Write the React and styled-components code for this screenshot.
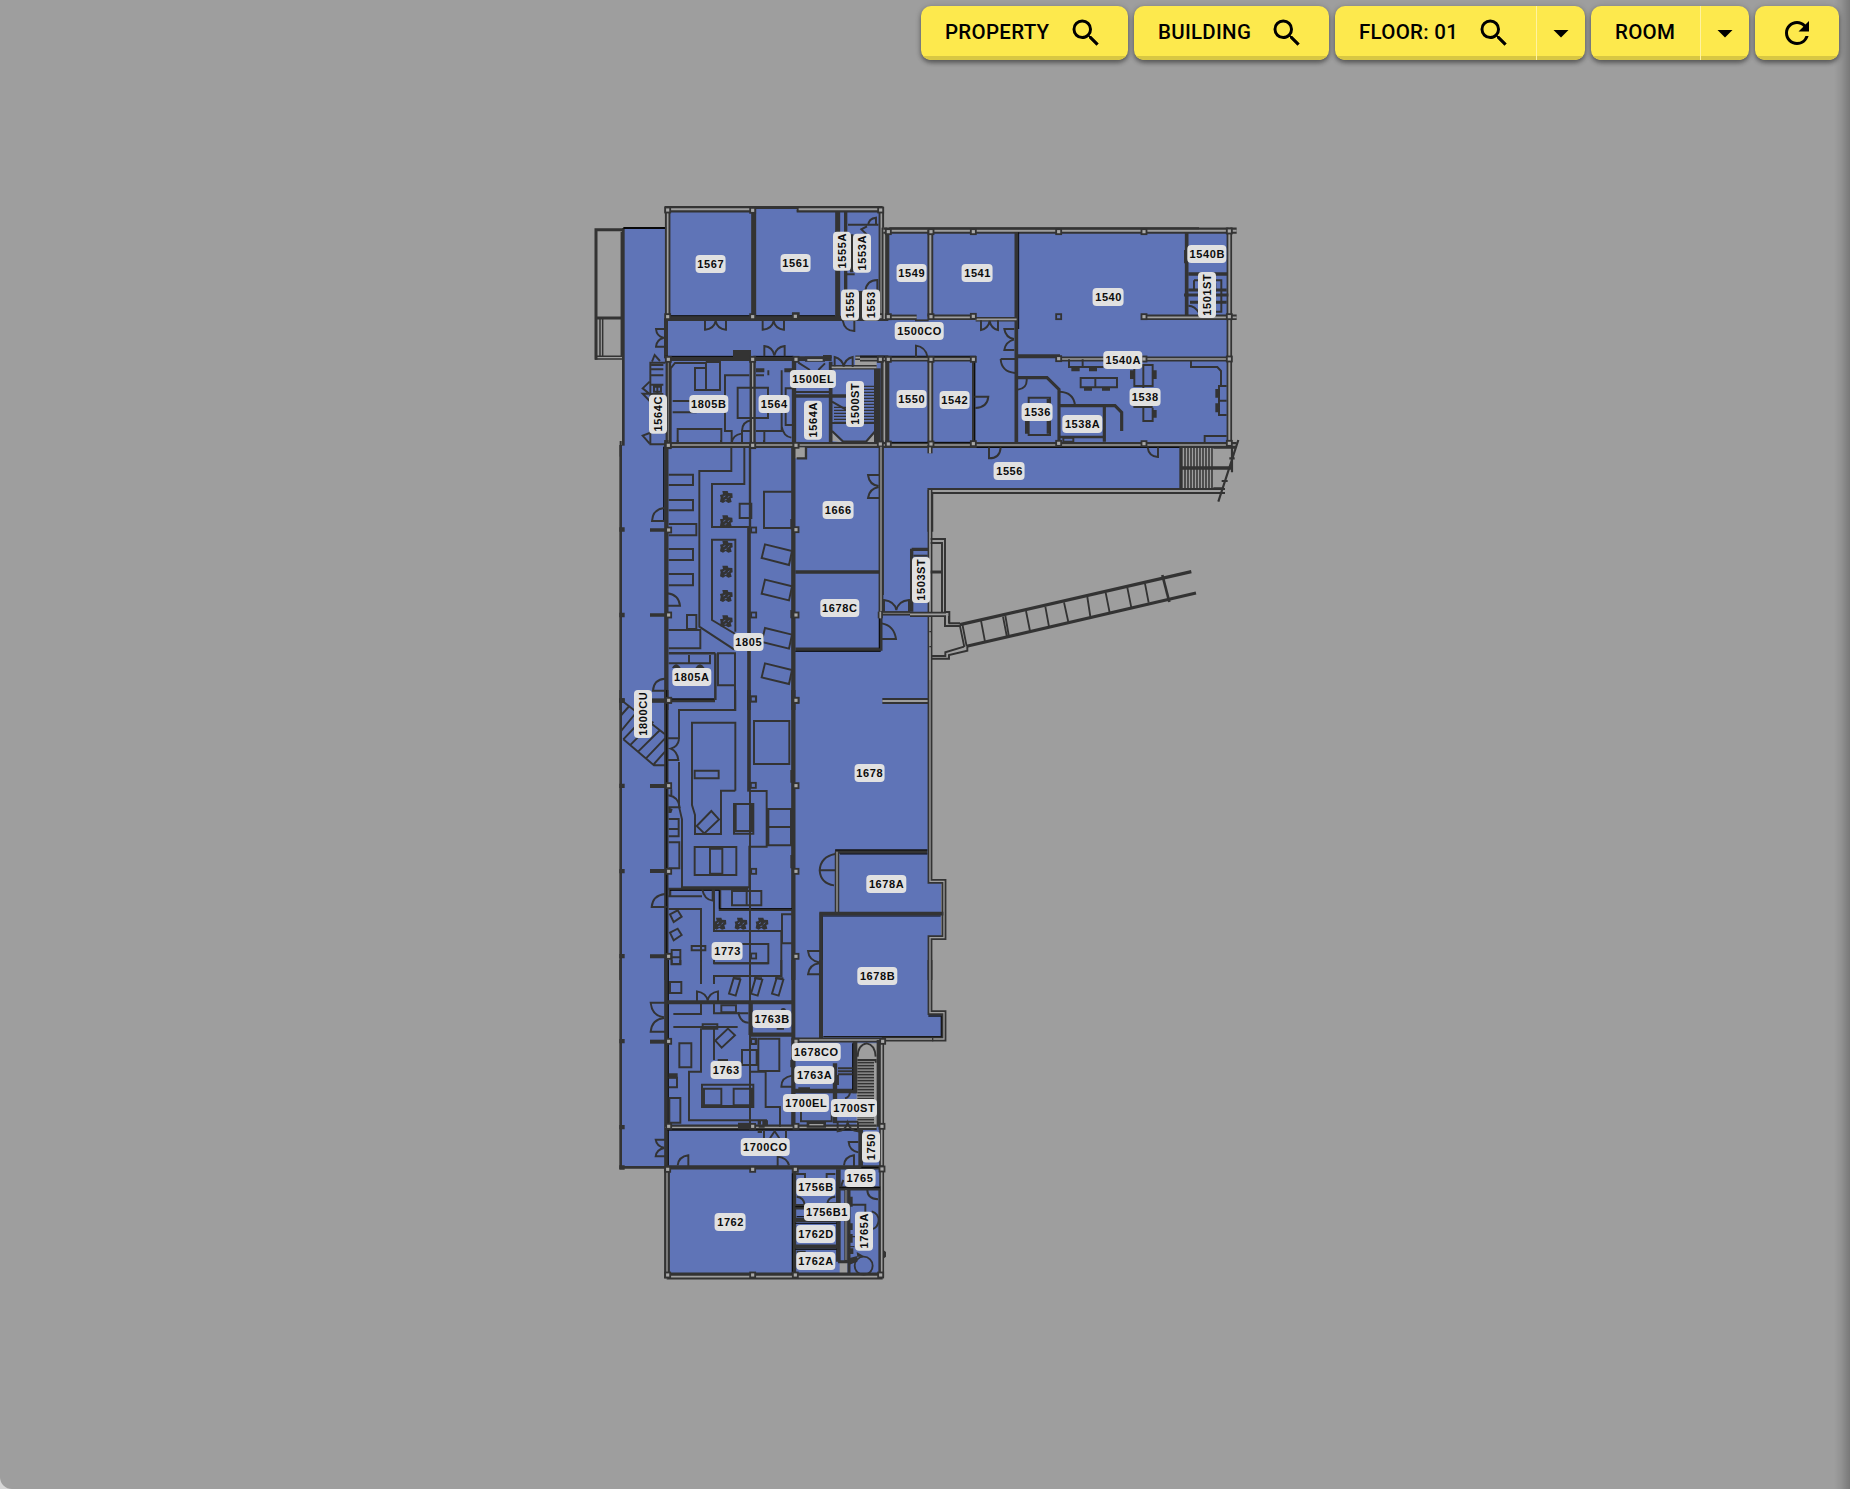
import React from "react";
import styled, { createGlobalStyle, css } from "styled-components";

const ink = "#333333";
const ground = "#9e9e9e";
const room = "#5f74b7";
const yellow = "#fde94d";

const GlobalStyle = createGlobalStyle`
  html, body { margin: 0; padding: 0; background: #d6d6d6; }
  *, *::before, *::after { box-sizing: border-box; }
`;

const Viewport = styled.main`
  position: relative;
  width: 1850px;
  height: 1489px;
  overflow: hidden;
  background: ${ground};
  border-bottom-left-radius: 12px;
  font-family: Roboto, "Liberation Sans", sans-serif;
`;

const EdgeShade = styled.div`
  position: absolute;
  inset: 0 0 0 auto;
  width: 16px;
  background: linear-gradient(to right, rgba(0, 0, 0, 0), rgba(0, 0, 0, 0.08) 45%, rgba(0, 0, 0, 0.24));
  pointer-events: none;
`;

const Toolbar = styled.nav`
  position: relative;
  display: flex;
  justify-content: flex-end;
  gap: 6px;
  padding: 6px 11px 0 0;
`;

const ButtonGroup = styled.div`
  display: flex;
  height: 54px;
  overflow: hidden;
  border-radius: 10px;
  background: ${yellow};
  box-shadow: 0 3px 4px rgba(0, 0, 0, 0.35), 0 1px 6px rgba(0, 0, 0, 0.2);
`;

const segment = css`
  display: flex;
  align-items: center;
  height: 54px;
  margin: 0;
  border: 0;
  color: #000;
  background: transparent;
  box-shadow: inset 0 -4px 0 #d8c743;
  cursor: pointer;
`;

const MainButton = styled.button`
  ${segment}
  justify-content: space-between;
  width: ${(p) => p.$width}px;
  padding: 0 24px;
  font: 500 20.5px/24px Roboto, sans-serif;
  letter-spacing: 0.28px;
  white-space: nowrap;
`;

const MenuButton = styled.button`
  ${segment}
  justify-content: center;
  width: 49px;
  padding: 0 1px 0 0;
  border-left: 1px solid #fff3a0;
`;

const Caption = styled.span`
  position: relative;
  top: -1px;
`;

const Icon = styled.svg`
  width: 36px;
  height: 36px;
  flex: none;
  fill: currentColor;
`;

const SearchIcon = () => (
  <Icon viewBox="0 0 24 24">
    <path d="M15.5 14h-.79l-.28-.27A6.471 6.471 0 0 0 16 9.5 6.5 6.5 0 1 0 9.5 16c1.61 0 3.09-.59 4.23-1.57l.27.28v.79l5 4.99L20.49 19l-4.99-5zm-6 0C7.01 14 5 11.99 5 9.5S7.01 5 9.5 5 14 7.01 14 9.5 11.99 14 9.5 14z" />
  </Icon>
);
const DropIcon = () => (
  <Icon viewBox="0 0 24 24">
    <path d="M7 10l5 5 5-5z" />
  </Icon>
);
const RefreshIcon = () => (
  <Icon viewBox="0 0 24 24">
    <path d="M17.65 6.35A7.958 7.958 0 0 0 12 4c-4.42 0-7.99 3.58-7.99 8s3.57 8 7.99 8c3.73 0 6.84-2.55 7.73-6h-2.08A5.99 5.99 0 0 1 12 18c-3.31 0-6-2.69-6-6s2.69-6 6-6c1.66 0 3.14.69 4.22 1.78L13 11h7V4l-2.35 2.35z" />
  </Icon>
);

/* ---------- floor plan drawing ---------- */

const Plan = styled.svg`
  position: absolute;
  inset: 0;
  width: 1850px;
  height: 1489px;
`;

const Area = styled.path`
  fill: ${(p) => (p.$void ? ground : room)};
`;

const Stroke = styled.path`
  fill: none;
  stroke: ${(p) => p.$tone || ink};
  stroke-width: ${(p) => p.$w || 5.8};
`;

const Solid = styled.path`
  fill: ${ink};
`;

const Column = styled.rect`
  fill: ${(p) => (p.$blue ? room : "#a8a8a8")};
  stroke: ${ink};
  stroke-width: 5.5;
`;

const Hollow = ({ d, w = 16, gap = 5 }) => (
  <>
    <Stroke d={d} $w={w + 1.5} />
    <Stroke d={d} $w={gap} $tone={ground} />
  </>
);

const Columns = ({ at, blue }) =>
  at.map(([x, y]) => <Column key={`${x}-${y}`} x={x - 7.5} y={y - 7.5} width="15" height="15" $blue={blue} />);

const Chair = ({ x, y }) => (
  <g transform={`translate(${x} ${y})`}>
    <Solid d="M-12 -18L4 -18L6 -12L18 -11L19 2L13 4L16 15L6 18L-2 13L-10 18L-19 14L-17 2L-19 -6L-10 -8Z" />
    <Stroke d="M-9 0L-3 -3M5 2L9 -3M-5 9L1 7" $w={2.5} $tone={room} />
  </g>
);

const treads = (from, to, step, make) => {
  let d = "";
  for (let v = from; v <= to; v += step) d += make(v);
  return d;
};

/* Each wing is drafted at three units to the pixel from its own corner. */
const Wing = ({ x, y, children }) => <g transform={`translate(${x} ${y}) scale(0.33333)`}>{children}</g>;

const NorthWest = () => (
  <Wing x={580} y={195}>
    <Area $void d="M825 495H890V515H825ZM755 738V710L785 742ZM890 742V705L860 742Z" />
    <Stroke d="M48 100V494M45 104H130M45 369H130" $w={9} />
    <Stroke d="M60 372V484M68 372V484M45 484H130M45 492H130M124 110V484" $w={4.5} />
    <Stroke d="M130 99V752" $w={8} />
    <Stroke d="M122 738V785" $w={6} />
    <Stroke d="M130 99H256" $tone="#080808" />
    <Hollow d="M254 43H908" w={18} gap={6} />
    <Stroke d="M528 47H650" $w={14} $tone={room} />
    <Stroke d="M528 39H653V49" />
    <Hollow d="M263 36V370" w={15} />
    <Hollow d="M904 36V372" w={15} />
    <Stroke d="M521 40V365M773 50V370" $w={15} />
    <Stroke d="M797 50V290M815 120V232" $w={10} />
    <Stroke d="M256 370H925" $w={16} />
    <Stroke d="M256 362H515M528 362H765" $w={3} $tone="#111" />
    <Stroke d="M258 370V490" $w={12} />
    <Stroke d="M256 491H755" $w={14} />
    <Stroke d="M256 484H460M520 484H640" $w={3} $tone="#080808" />
    <Hollow d="M265 490V750" w={15} gap={2} />
    <Hollow d="M518 490V750" w={17} gap={4} />
    <Stroke d="M642 490V750" $w={13} />
    <Hollow d="M256 750H925" w={16} gap={4} />
    <Stroke d="M648 603H826M752 500V745" $w={11} />
    <Stroke d="M892 520V745" $w={20} />
    <Hollow d="M910 490V750" w={14} />
    <Hollow d="M826 488H925" w={12} />
    <Hollow d="M755 517H890" w={12} />
    <Solid d="M459 465H513V492H459ZM636 365V352H659V365ZM850 288H833V375H850ZM528 520H553V532H528ZM613 520H640V532H613ZM675 485H735V500H675ZM729 480H755V490H729Z" />
    <Stroke d="M682 495H728" $w={6} $tone={ground} />
    <Columns at={[[263, 45], [518, 46], [902, 45], [263, 365], [518, 365], [646, 364], [902, 365], [265, 493], [518, 493], [648, 493], [902, 493], [264, 752], [518, 752], [648, 752]]} />

    <Stroke d="M375 376V404Q402 402 407 378Q412 402 438 404V376M548 376V404Q576 402 581 378Q586 402 612 404V376M553 484V453Q579 456 583 482Q588 456 614 453V484" />
    <Stroke d="M256 402H228Q230 424 250 428H256M256 455H228Q230 434 250 429M823 376V408Q794 408 788 376M764 514V486Q787 492 791 515Q796 491 818 486V516" />
    <Stroke d="M804 89H895M895 90L888 88V68Q866 70 864 92M861 94L844 103L862 120M892 288V255Q860 255 856 288M800 238H824M810 121H820M812 155H820" />
    <Stroke d="M256 503H211V748H256M214 510H250M214 523H250M214 541H250M214 569H250M214 597H250M232 569V600M222 575H243V590H222Z" />
    <Stroke d="M209 560L188 580L209 597M216 500L224 480L240 498M209 596H188L209 618M209 714L188 722L209 746" />
    <Stroke d="M272 748V520L285 504H378M378 500V585M378 501H420V585H345V519H378M278 618H330M278 652H350M293 745V702H424V745" />
    <Stroke d="M508 541H435V708H455V745M473 578H564V669H473ZM455 745Q458 720 484 716M486 745V708H510M486 708Q486 680 515 676" />
    <Stroke d="M553 742V708H605M528 708H605V526M640 580H617V690H640M605 694Q610 724 634 728M528 541H552M565 526V541" />
    <Stroke d="M655 503L690 525M735 505L715 525M647 591H752M690 530H760" />
    <Stroke d={treads(574, 688, 9, (v) => `M${v < 630 ? 848 : 762} ${v}H882`)} $w={3.5} />
    <Stroke d="M756 620L798 644M756 684H886M756 708L790 740H858L888 706" $w={6.5} />
  </Wing>
);

const NorthEast = () => (
  <Wing x={860} y={195}>
    <Stroke d="M83 105V370M83 490V750" $w={10} />
    <Hollow d="M73 98V372" w={15} />
    <Hollow d="M73 490V756" w={12} />
    <Hollow d="M70 107H1130" w={17} gap={6} />
    <Stroke d="M88 100H1017" $w={6} />
    <Hollow d="M211 105V368" w={16} gap={6} />
    <Hollow d="M211 490V750" w={16} gap={6} />
    <Stroke d="M469 112V745" $w={11} />
    <Stroke d="M476 112V402" $w={3} $tone="#080808" />
    <Hollow d="M80 367H170" w={15} />
    <Hollow d="M203 367H345" w={15} />
    <Hollow d="M347 373H470" w={12} />
    <Stroke d="M165 376H206" />
    <Stroke d="M0 484H348" $w={4} $tone="#080808" />
    <Hollow d="M0 492H348" w={14} />
    <Stroke d="M341 490V748" $w={10} />
    <Stroke d="M344 500V745" $w={3} $tone="#080808" />
    <Hollow d="M0 750H1130" w={16} gap={5} />
    <Stroke d="M85 742H340M350 757H958" $w={3} $tone="#080808" />
    <Stroke d="M980 112V368" $w={11} />
    <Hollow d="M1108 98V750" w={15} gap={6} />
    <Hollow d="M843 367H1130" w={15} />
    <Stroke d="M985 237H1102" $w={10} />
    <Stroke d="M472 484H600" $w={12} />
    <Hollow d="M600 492H1112" w={14} />
    <Stroke d="M472 548H561L597 583V745M600 632H765L785 652V708M733 636V740" $w={9.5} />
    <Stroke d="M600 726H733" $w={8} />
    <Hollow d="M1095 888H211V1010" w={16} gap={6} />
    <Hollow d="M65 758V1200" w={12} />
    <Hollow d="M210 750V775" w={14} gap={6} />
    <Columns at={[[85, 110], [213, 110], [340, 110], [596, 110], [852, 110], [1108, 108], [85, 365], [213, 365], [340, 364], [852, 365], [1108, 365], [61, 493], [85, 493], [213, 493], [340, 493], [596, 491], [852, 492], [1108, 492], [61, 747], [85, 747], [213, 747], [340, 746], [596, 745], [852, 746], [1108, 745]]} />
    <Columns blue at={[[596, 365]]} />

    <Stroke d="M363 376V405Q385 400 389 378Q393 400 414 405V376M463 402H433Q437 428 462 432M463 465H433Q437 440 462 434M422 492H465M422 492Q424 530 465 534" />
    <Stroke d="M168 488V452Q196 456 202 484M343 605H385Q382 638 346 639M387 757V790Q420 790 422 757M894 757V786Q866 784 863 757M500 552Q502 580 474 584M600 590Q640 592 645 630" />
    <Stroke d="M627 493V516H730M668 493V516M662 549H771V577H662ZM706 549V577" />
    <Solid d="M634 517H659V529H634ZM687 517H711V529H687ZM672 577H696V587H672ZM726 577H750V587H726ZM495 640H507V716H495ZM560 612H573V716H560ZM1066 582H1080V608H1066ZM1066 625H1080V652H1066ZM876 526H890V552H876ZM876 645H890V668H876ZM810 526H824V552H810Z" />
    <Stroke d="M823 510H878V573H823ZM850 510V678H878V638M823 600V636H878M506 608H570V720H506ZM993 498V516H1072L1083 528V573M1100 573H1077V617H1100M1077 617V660H1100M1100 723H1034V742M610 728H640V740H610Z" />
    <Stroke d="M1002 256H1084V350H1060M1002 256V285H1030M975 165V205M985 332Q1005 332 1018 355M1066 265V290" />
    <Stroke d="M972 300H1105M985 285H1100M990 322H1100" $w={9} />
    <Stroke d={treads(975, 1060, 9, (v) => `M${v} 758V880`)} $w={4.5} />
    <Stroke d="M963 758V882M963 819H1115" $w={10} />
    <Stroke d="M1135 735L1075 920M1116 758V832M1108 790H1124M1085 858H1103M1060 758H1130M1060 880H1090" $w={6.5} />
  </Wing>
);

const Centre = () => (
  <Wing x={610} y={440}>
    <Area $void d="M552 22H585V55H552Z" />
    <Stroke d="M32 15V810" $w={8} />
    <Stroke d="M169 0V810" $w={13} />
    <Stroke d="M161 20V245" $w={3} $tone="#080808" />
    <Stroke d="M120 270H170M120 525H170M120 781H315" $w={11} />
    <Stroke d="M550 20V810" $w={13} />
    <Stroke d="M556 396H810M556 628H812M812 520V632" $w={11} />
    <Stroke d="M556 634H812M808 530V625M175 777H312" $w={3} $tone="#080808" />
    <Stroke d="M417 262V810" $w={11} />
    <Hollow d="M813 20V525" w={13} gap={4} />
    <Hollow d="M817 783H955" w={17} gap={6} />
    <Stroke d="M316 640V780M176 640H316" $w={7.5} />
    <Stroke d="M420 18V262M560 55H588V20" $w={7} />
    <Columns at={[[175, 16], [428, 16], [558, 16], [176, 270], [558, 269], [176, 525], [558, 525], [176, 781], [558, 781]]} />
    <Columns blue at={[[431, 270], [431, 525], [431, 777]]} />
    <Solid d="M28 262H44V275H28ZM28 518H44V532H28ZM28 775H44V788H28ZM541 237H552V268H541ZM541 510H552V535H541Z" />

    <Stroke d="M176 104H249V135H176M176 180H249V211H176M176 252H259V286H176M176 327H249V360H176M176 402H249V436H176M231 525H259V567H231ZM176 570H271V625H176" />
    <Stroke d="M364 20V93H268V560L372 628M403 22V132H306V261H420M376 575V299H306V540L376 582M389 191H424V234H389Z" />
    <Stroke d="M546 155H462V264H546M465 313L546 333L537 375L455 354ZM465 419L546 439L537 481L455 461ZM465 564L546 584L537 626L455 606ZM465 670L546 690L537 732L455 712Z" />
    <Stroke d="M324 640H375V736H324ZM375 640V810M176 670H300V645M237 645V670" />
    <Solid d="M186 684Q198 662 212 684ZM256 684Q270 662 284 684Z" />
    {[171, 244, 320, 395, 468, 544].map((y) => (
      <Chair key={y} x={349} y={y} />
    ))}
    <Stroke d="M162 204Q128 208 126 243H162M172 460Q206 464 210 497H172M165 716Q131 718 129 752H165" />
    <Stroke d="M810 105H774Q778 135 806 138M810 174H774Q778 146 806 141M815 550Q852 556 858 597H815" />
    <Stroke d="M203 0V8M333 0V12M396 0V12M462 0V12" />
  </Wing>
);

const Link = () => (
  <Wing x={860} y={530}>
    <Hollow d="M210 -120V450" w={13} gap={5} />
    <Stroke d="M208 305H214M208 350H214" $w={4} />
    <Stroke d="M212 27H255V246H268V280H300M212 39H246V246M255 246V288H300" />
    <Stroke d="M212 126H246" $w={9} />
    <Hollow d="M58 250H150" w={12} gap={2} />
    <Hollow d="M150 253H258" w={14} gap={5} />
    <Hollow d="M61 245V265" w={14} gap={5} />
    <Stroke d="M155 56V245M155 58H206" $w={10} />
    <Stroke d="M160 77H203" />
    <Stroke d="M72 245V210Q104 214 109 240Q115 213 147 210V245" />
    <Stroke d="M214 386H267V375L322 362V350M214 378H256V367L312 350M267 258V280" />
    <Stroke d="M300 284L994 125M320 349L1008 189" $w={9.5} />
    <Stroke d="M299 284L313 351M307 282L320 349M363 272L375 335M429 260L441 322M436 257L447 321M498 243L510 303M556 230L567 290M612 217L625 276M682 201L691 260M737 188L749 248M802 173L814 233M855 161L866 218" $w={5.5} />
    <Stroke d="M907 135L928 216" $w={8} />
  </Wing>
);

const Middle = () => (
  <Wing x={610} y={690}>
    <Stroke d="M32 0V870" $w={8} />
    <Stroke d="M169 0V870" $w={13} />
    <Stroke d="M170 0V870" $w={3} $tone="#0c0c0c" />
    <Stroke d="M120 288H170M120 543H170M120 799H170M120 32H170" $w={12} />
    <Stroke d="M550 0V870" $w={13} />
    <Stroke d="M417 0V305" $w={11} />
    <Hollow d="M960 -30V574H1002V743H960V870" w={13} gap={4} />
    <Stroke d="M675 485H952" $w={13} />
    <Stroke d="M676 480H952M690 492H952M632 678H992M637 680V870" $w={3} $tone="#080808" />
    <Hollow d="M681 485V668" w={12} gap={4} />
    <Stroke d="M628 671H1000M633 668V870" $w={11} />
    <Stroke d="M175 597H415M330 600V659H548M180 600V620" $w={7.5} />
    <Stroke d="M180 601H328V656H546" $w={3} $tone="#080808" />
    <Columns at={[[176, 31], [558, 31], [176, 287], [558, 287], [176, 544], [558, 544], [176, 799], [558, 799]]} />
    <Columns blue at={[[430, 27], [430, 286], [431, 544], [431, 798]]} />
    <Solid d="M28 25H44V38H28ZM28 281H44V294H28ZM28 537H44V550H28ZM28 792H44V805H28ZM541 240H550V278H541ZM541 495H550V535H541ZM175 352L188 358L184 369H175Z" />

    <Stroke d="M40 35L165 133M40 148L132 226H165M34 75L58 48M34 122L75 72M40 148L95 90M62 164L130 95M85 184L150 120M108 205L165 145M132 222L165 185" />
    <Stroke d="M172 145H207V60H376V0M207 148Q204 170 182 176Q202 184 205 210H172M207 216V350L216 388V592H418V470H470V303H418" />
    <Stroke d="M376 302V98H246V345L255 375V432H333V302H376M254 242H326V265H254ZM304 363L327 388L283 430L260 408Z" />
    <Stroke d="M432 93H538V222H432ZM372 342H430V431H372ZM372 423H430M472 357H543V466H472ZM472 411H543M254 471H379V555H254ZM300 471V555M337 471V555M300 476H337M300 551H337" />
    <Stroke d="M376 345V426M425 345V426M474 357V466" $w={8} />
    <Stroke d="M176 387H206V439H176M176 417H206M176 457H208V535H176M175 316Q205 320 209 352H175M184 298V318" />
    <Stroke d="M420 300V870M165 612Q128 616 125 651H170M277 598Q282 628 308 632V598M175 619H276M312 598V723H515M273 870V657H176" />
    <Stroke d="M366 603H454V646H366ZM410 603V646M546 673H516V760H546M514 723V858H312V870M397 762H475V820H312M245 768H286V781H245ZM185 780H211V823H185ZM185 802H211" />
    <Stroke d="M180 673L203 661L215 680L191 696ZM180 728L203 716L215 735L191 751ZM370 865H392M432 865H456M495 865H520" />
    <Chair x={330} y={701} />
    <Chair x={393} y={701} />
    <Chair x={456} y={701} />
    <Stroke d="M675 492Q632 500 629 541Q632 580 672 586M629 541H677M630 783H594Q597 812 628 817M630 853H594Q597 824 628 820" />
  </Wing>
);

const South = () => (
  <Wing x={610} y={960}>
    <Area $void d="M740 250H802V500H740ZM689 905H712V941H689Z" />
    <Stroke d="M32 0V627M28 622H165" $w={8} />
    <Stroke d="M169 0V627" $w={13} />
    <Stroke d="M175 0V625" $w={3} $tone="#0c0c0c" />
    <Hollow d="M960 0V158H1002V237H815" w={13} gap={4} />
    <Stroke d="M955 168H994V230H640" $w={4} $tone="#1a1a1a" />
    <Stroke d="M550 0V240M633 0V238" $w={12} />
    <Hollow d="M552 240H815" w={13} />
    <Stroke d="M968 244V232" $w={4} />
    <Stroke d="M172 127H550" $w={12} />
    <Stroke d="M422 130V225M422 224H550" $w={13} />
    <Stroke d="M550 235V500" $w={13} />
    <Stroke d="M120 245H175" $w={12} />
    <Hollow d="M165 502H800" w={15} gap={4} />
    <Stroke d="M172 510H745" $w={4} $tone="#111" />
    <Stroke d="M735 245V400M807 240V500" $w={14} />
    <Hollow d="M815 240V950" w={13} />
    <Stroke d="M675 310V490M555 393H740" $w={13} />
    <Stroke d="M728 250V390" $w={3} $tone="#080808" />
    <Hollow d="M170 950H818" w={16} gap={5} />
    <Stroke d="M178 940H812" $w={5} />
    <Hollow d="M171 622V955" w={16} gap={4} />
    <Stroke d="M165 622H820M552 622V945" $w={13} />
    <Stroke d="M547 640V940" $w={3} $tone="#080808" />
    <Stroke d="M752 510V620M685 628V905" $w={14} />
    <Stroke d="M690 685H812M555 742H690M555 780H685M555 860H685" $w={13} />
    <Stroke d="M556 740H600M560 770H640M556 790H680M556 868H680M754 622H812M688 683H810" $w={3} $tone="#080808" />
    <Stroke d="M708 685V905" $w={10} />
    <Stroke d="M708 690V900" $w={3} $tone={ground} />
    <Stroke d="M717 690V942M684 905H716" $w={9} />
    <Stroke d="M808 690V942" />
    <Solid d="M820 870L828 876V890L820 896ZM716 710H728V740H716ZM716 790H728V810H716ZM716 822H728V848H716ZM716 865H730V882H716ZM716 895L742 888V905L716 915ZM740 876L765 890H742ZM384 488H420V508H384ZM590 486H648V503H590ZM565 382H600V394H565ZM176 340H203V355H176ZM541 300H552V322H541ZM443 482H453V494H443ZM457 480H468V496H457ZM446 497H464V503H446ZM443 510H456V519H443Z" />
    <Columns at={[[176, 244], [558, 244], [818, 244], [176, 499], [428, 499], [558, 499], [816, 499], [173, 628], [428, 628], [556, 628], [816, 627], [173, 945], [428, 945], [556, 945], [812, 945]]} />
    <Columns blue at={[[431, 244]]} />
    <Stroke d="M598 494H640" $w={4} $tone={ground} />
    <Solid d="M28 237H44V250H28ZM28 495H44V508H28ZM28 616H44V629H28Z" />

    <Stroke d="M273 0V72M312 0V10H475M514 0V48H312V72M420 0V500M180 66H214V99H180ZM185 0V12H211V0" />
    <Stroke d="M371 54L391 59L377 107L357 101ZM437 54L457 59L443 107L423 101ZM500 54L520 59L506 107L486 101Z" />
    <Stroke d="M261 125V94Q288 98 293 122Q298 98 324 94V125M165 128H122Q126 168 162 172M165 215H122Q126 178 162 174M385 156Q390 188 416 188" />
    <Stroke d="M190 162H273V132M312 132V160H415M334 136H378V157H334ZM190 201H383M278 193H322V206H278ZM354 206L375 226L335 263L316 242Z" />
    <Stroke d="M208 250H244V322H208ZM273 205V335H237V481H471M312 200V300M445 236H508V333H445ZM396 270H440V315H396ZM423 236H437V252H423ZM420 335H467V441H510V500M323 300H354M471 481V495" />
    <Stroke d="M176 353H201V382H176M178 414H211V488H178Z" />
    <Stroke d="M276 374H430V441H276ZM282 386H334V436H282ZM371 386H425V436H371Z" />
    <Stroke d="M276 439H430" $w={8} />
    <Stroke d="M165 539H137Q140 560 163 563M165 589H137Q140 568 163 564M235 620V586Q206 590 203 616M503 620V590Q532 594 537 616M462 510V535M528 510V535M480 535L494 514L508 535" />
    <Stroke d="M732 620V586Q704 590 702 616M745 546H716Q718 572 745 577M683 488V514Q706 512 713 488Q720 512 744 514V488M680 485H745" />
    <Stroke d="M546 347Q514 352 514 380H546M514 150Q520 144 526 150M500 206H522M573 455V484H665V455" />
    <Stroke d="M555 642H585V655M676 642H650V655M555 735H584Q582 712 560 710M684 730H652Q654 712 676 710M560 875H587" />
    <Stroke d="M743 290Q744 254 770 250Q795 254 797 290M684 325H728M684 334H728M684 343H728M684 375V345M705 415Q718 412 720 398" />
    <Stroke d={treads(308, 496, 9, (v) => `M742 ${v}H792`)} $w={5.5} />
    <Stroke d="M742 300H797V308M804 718Q772 716 772 690M725 734H766V760M785 754Q806 760 806 782Q804 804 785 808M700 660Q694 672 694 682" />
    <Stroke d="M720 830H740M720 860H733" $w={4} />
    <circle cx="761" cy="917" r="27" fill="none" stroke={ink} strokeWidth="5.5" />
  </Wing>
);

const FloorPlan = () => (
  <Plan viewBox="0 0 1850 1489">
    <Area d="M622 228H667V210H881V230H1229V445H1180V490H929V883H941V937H929V1014H941V1038H880V1276H668V1168H621V446H622Z" />
    <NorthWest />
    <NorthEast />
    <Centre />
    <Middle />
    <South />
    <Link />
  </Plan>
);

/* ---------- room labels ---------- */

const Pin = styled.span`
  position: absolute;
  left: ${(p) => p.$x}px;
  top: ${(p) => p.$y}px;
  height: 18px;
  padding: 0 1.7px 0 2.3px;
  border-radius: 4px;
  transform: translate(-50%, -50%) ${(p) => (p.$upright ? "rotate(-90deg)" : "")};
  background: #e1e1e1;
  color: #0c0c0c;
  font: 700 11px/18px "Liberation Sans", Arial, sans-serif;
  letter-spacing: 0.6px;
  white-space: nowrap;
`;

const rooms = [
  ["1567", 710.5, 264], ["1561", 795.5, 263.3], ["1555A", 842, 251.3, 1], ["1553A", 861.5, 253.3, 1],
  ["1555", 849.7, 305.3, 1], ["1553", 871, 305.3, 1], ["1500EL", 813, 379], ["1805B", 708.5, 403.7],
  ["1564", 774, 403.7], ["1564C", 657.7, 414.3, 1], ["1564A", 812.7, 420, 1], ["1500ST", 854.5, 404, 1],
  ["1549", 911.5, 273], ["1541", 977.3, 273.3], ["1540", 1108.3, 297], ["1540B", 1207, 253.7],
  ["1501ST", 1207, 295, 1], ["1500CO", 919.3, 331], ["1540A", 1123, 360], ["1550", 911.5, 399],
  ["1542", 954.5, 400], ["1536", 1037.3, 412.3], ["1538A", 1082.3, 424.3], ["1538", 1145, 397],
  ["1556", 1009.3, 471], ["1666", 838, 510], ["1678C", 839.5, 608.3], ["1503ST", 921, 580, 1],
  ["1805", 748.5, 642.3], ["1805A", 691.5, 677], ["1800CU", 642.7, 714, 1], ["1678", 869.5, 773.3],
  ["1678A", 886.3, 883.7], ["1773", 727.3, 951], ["1678B", 877.3, 976.4], ["1763B", 771.8, 1019],
  ["1678CO", 816, 1052.3], ["1763", 726, 1070], ["1763A", 814.3, 1075], ["1700EL", 806, 1102.5],
  ["1700ST", 854, 1108], ["1700CO", 765, 1147.3], ["1750", 871, 1147.3, 1], ["1765", 859.7, 1177.5],
  ["1756B", 815.7, 1186.7], ["1756B1", 826.7, 1212], ["1762", 730.3, 1221.5], ["1762D", 815.7, 1234.3],
  ["1765A", 863.9, 1231.3, 1], ["1762A", 815.7, 1261.3],
];

export default function App() {
  return (
    <>
      <GlobalStyle />
      <Viewport>
        <FloorPlan />
        {rooms.map(([name, x, y, upright]) => (
          <Pin key={name} $x={x} $y={y} $upright={upright}>
            {name}
          </Pin>
        ))}
        <EdgeShade />
        <Toolbar>
          <ButtonGroup>
            <MainButton $width={207}>
              <Caption>PROPERTY</Caption>
              <SearchIcon />
            </MainButton>
          </ButtonGroup>
          <ButtonGroup>
            <MainButton $width={195}>
              <Caption>BUILDING</Caption>
              <SearchIcon />
            </MainButton>
          </ButtonGroup>
          <ButtonGroup>
            <MainButton $width={201}>
              <Caption>FLOOR: 01</Caption>
              <SearchIcon />
            </MainButton>
            <MenuButton aria-label="Choose floor">
              <DropIcon />
            </MenuButton>
          </ButtonGroup>
          <ButtonGroup>
            <MainButton $width={109}>
              <Caption>ROOM</Caption>
            </MainButton>
            <MenuButton aria-label="Choose room">
              <DropIcon />
            </MenuButton>
          </ButtonGroup>
          <ButtonGroup>
            <MainButton $width={84} aria-label="Refresh">
              <RefreshIcon />
            </MainButton>
          </ButtonGroup>
        </Toolbar>
      </Viewport>
    </>
  );
}
